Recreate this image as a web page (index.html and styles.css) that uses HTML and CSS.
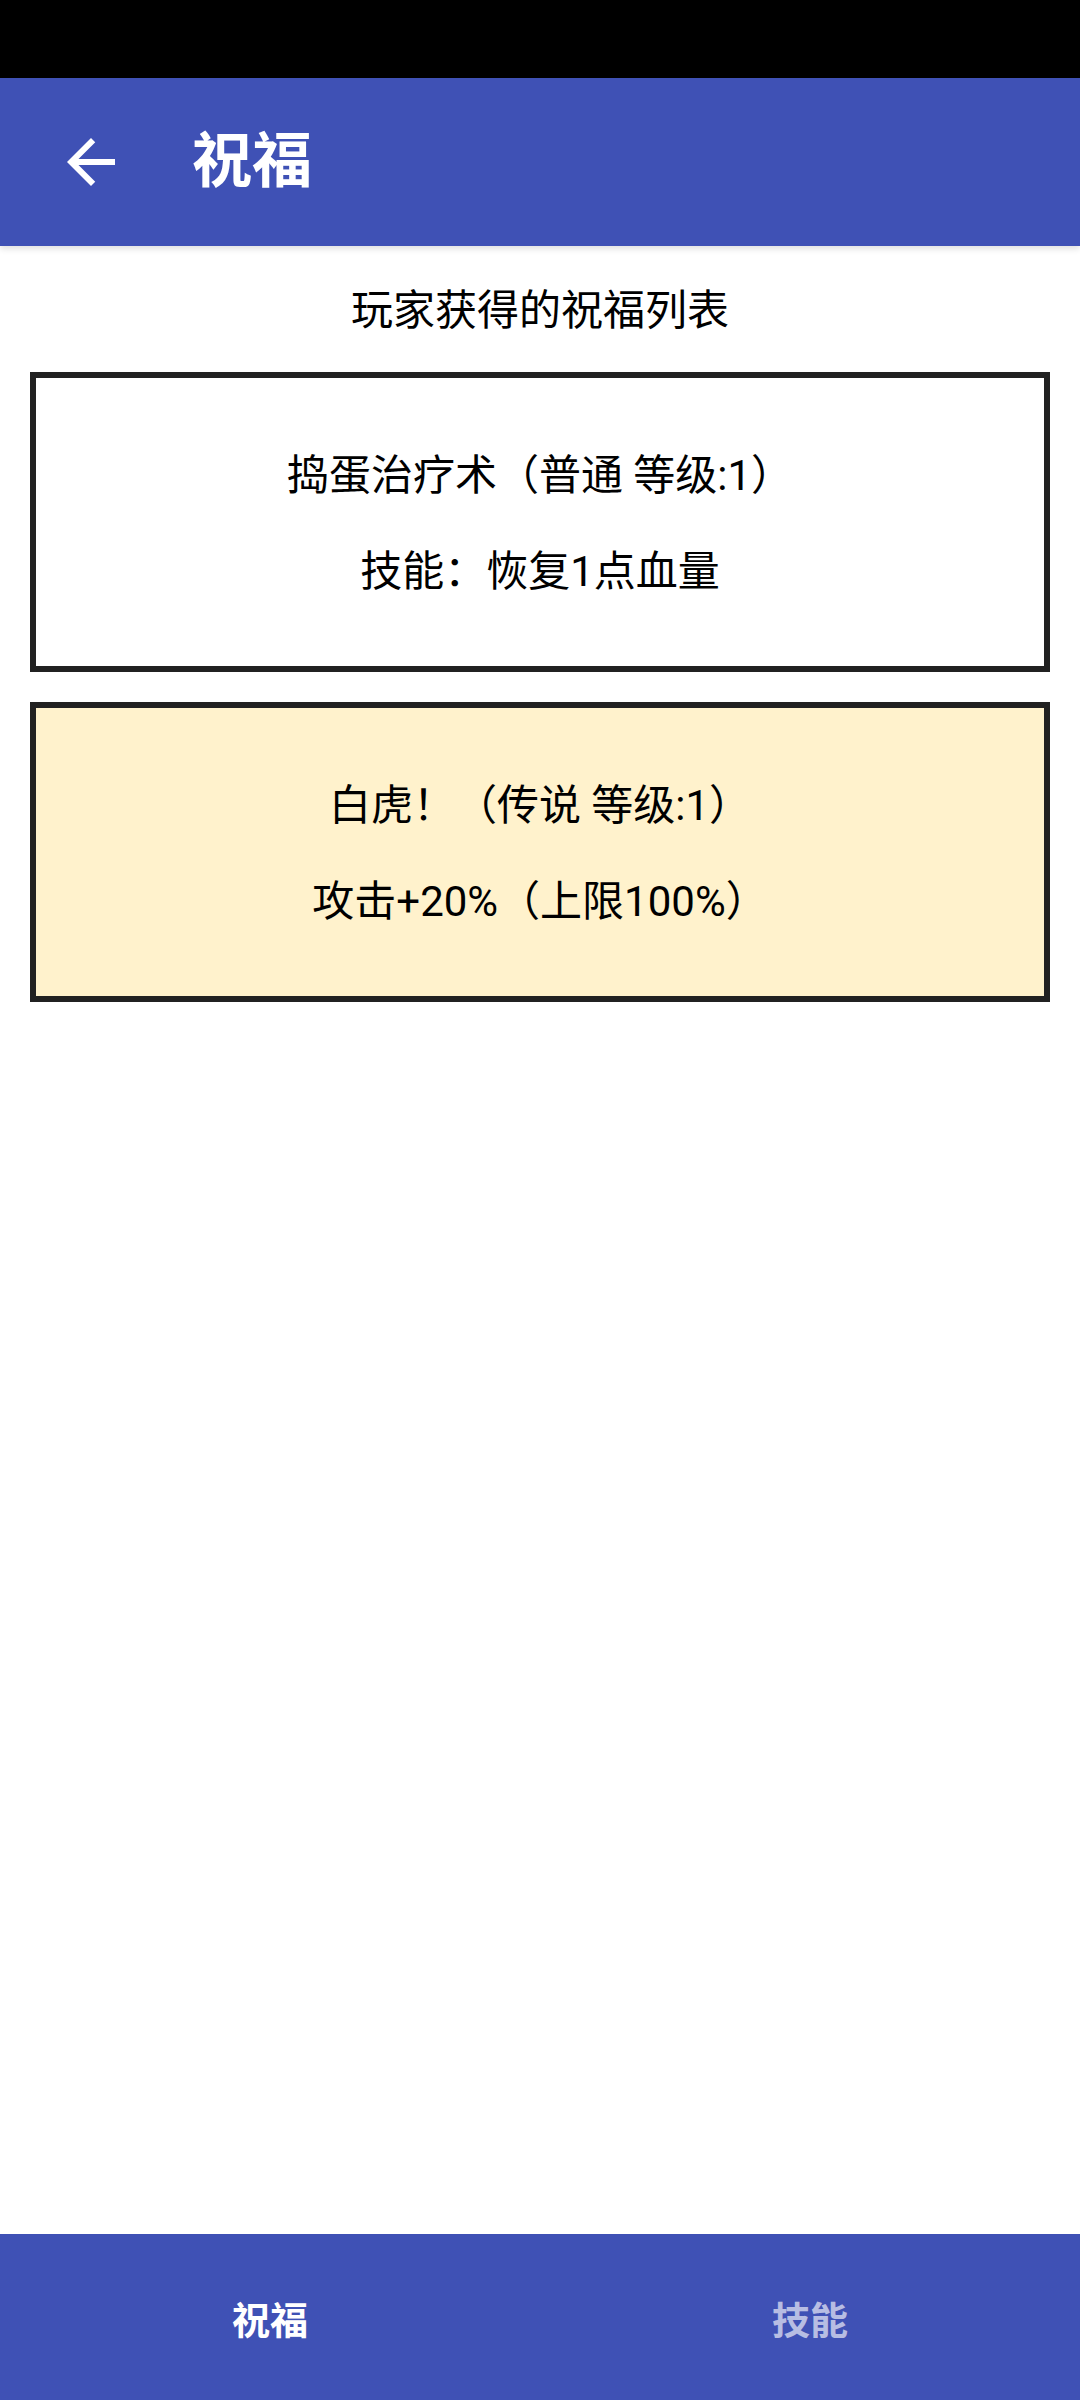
FILE: index.html
```html
<!DOCTYPE html>
<html lang="zh-CN">
<head>
<meta charset="utf-8">
<title>祝福</title>
<link rel="stylesheet" href="styles.css">
</head>
<body>
<div class="screen">
  <div class="status-bar"></div>
  <header class="app-bar">
    <svg class="back" viewBox="0 0 24 24" width="72" height="72" aria-hidden="true">
      <path fill="#ffffff" d="M20 11H7.83l5.59-5.59L12 4l-8 8 8 8 1.41-1.41L7.83 13H20v-2z"/>
    </svg>
    <h1 class="title">祝福</h1>
  </header>
  <main class="content">
    <p class="subtitle">玩家获得的祝福列表</p>
    <div class="card">
      <p class="line">捣蛋治疗术（普通 等级:1）</p>
      <p class="line">技能：恢复1点血量</p>
    </div>
    <div class="card card-legend">
      <p class="line">白虎！（传说 等级:1）</p>
      <p class="line">攻击+20%（上限100%）</p>
    </div>
  </main>
  <nav class="bottom-nav">
    <div class="tab tab-active">祝福</div>
    <div class="tab">技能</div>
  </nav>
</div>
</body>
</html>
```
FILE: styles.css
```css
* { box-sizing: border-box; }
html, body { margin: 0; padding: 0; background: #ffffff; }
body {
  font-family: Roboto, "Noto Sans CJK SC", "Noto Sans", sans-serif;
  color: #000000;
}
.screen {
  width: 1080px;
  height: 2400px;
  display: flex;
  flex-direction: column;
  overflow: hidden;
}
.status-bar {
  height: 78px;
  background: #000000;
  flex: none;
}
.app-bar {
  height: 168px;
  flex: none;
  background: #3f51b5;
  display: flex;
  align-items: center;
  padding-left: 55px;
  box-shadow: 0 3px 6px rgba(0,0,0,0.12);
  position: relative;
  z-index: 1;
}
.back { display: block; flex: none; }
.title {
  margin: 0 0 0 65px;
  color: #ffffff;
  font-size: 60px;
  font-weight: 700;
  line-height: 72px;
}
.content {
  flex: 1;
  display: flex;
  flex-direction: column;
  padding: 37px 30px 0;
  gap: 30px;
}
.subtitle {
  margin: 0 0 3px;
  text-align: center;
  font-size: 42px;
  line-height: 56px;
}
.card {
  border: 6px solid #212121;
  background: #ffffff;
  height: 300px;
  padding: 70px 0 0;
  display: flex;
  flex-direction: column;
  align-items: center;
  gap: 40px;
}
.card-legend { background: #fff2cc; }
.line {
  margin: 0;
  font-size: 42px;
  line-height: 56px;
  text-align: center;
  white-space: nowrap;
}
.bottom-nav {
  height: 166px;
  flex: none;
  background: #3f51b5;
  display: flex;
}
.tab {
  flex: 1;
  display: flex;
  align-items: center;
  justify-content: center;
  font-size: 38px;
  font-weight: 700;
  color: rgba(255,255,255,0.64);
}
.tab-active { color: #ffffff; }
```
